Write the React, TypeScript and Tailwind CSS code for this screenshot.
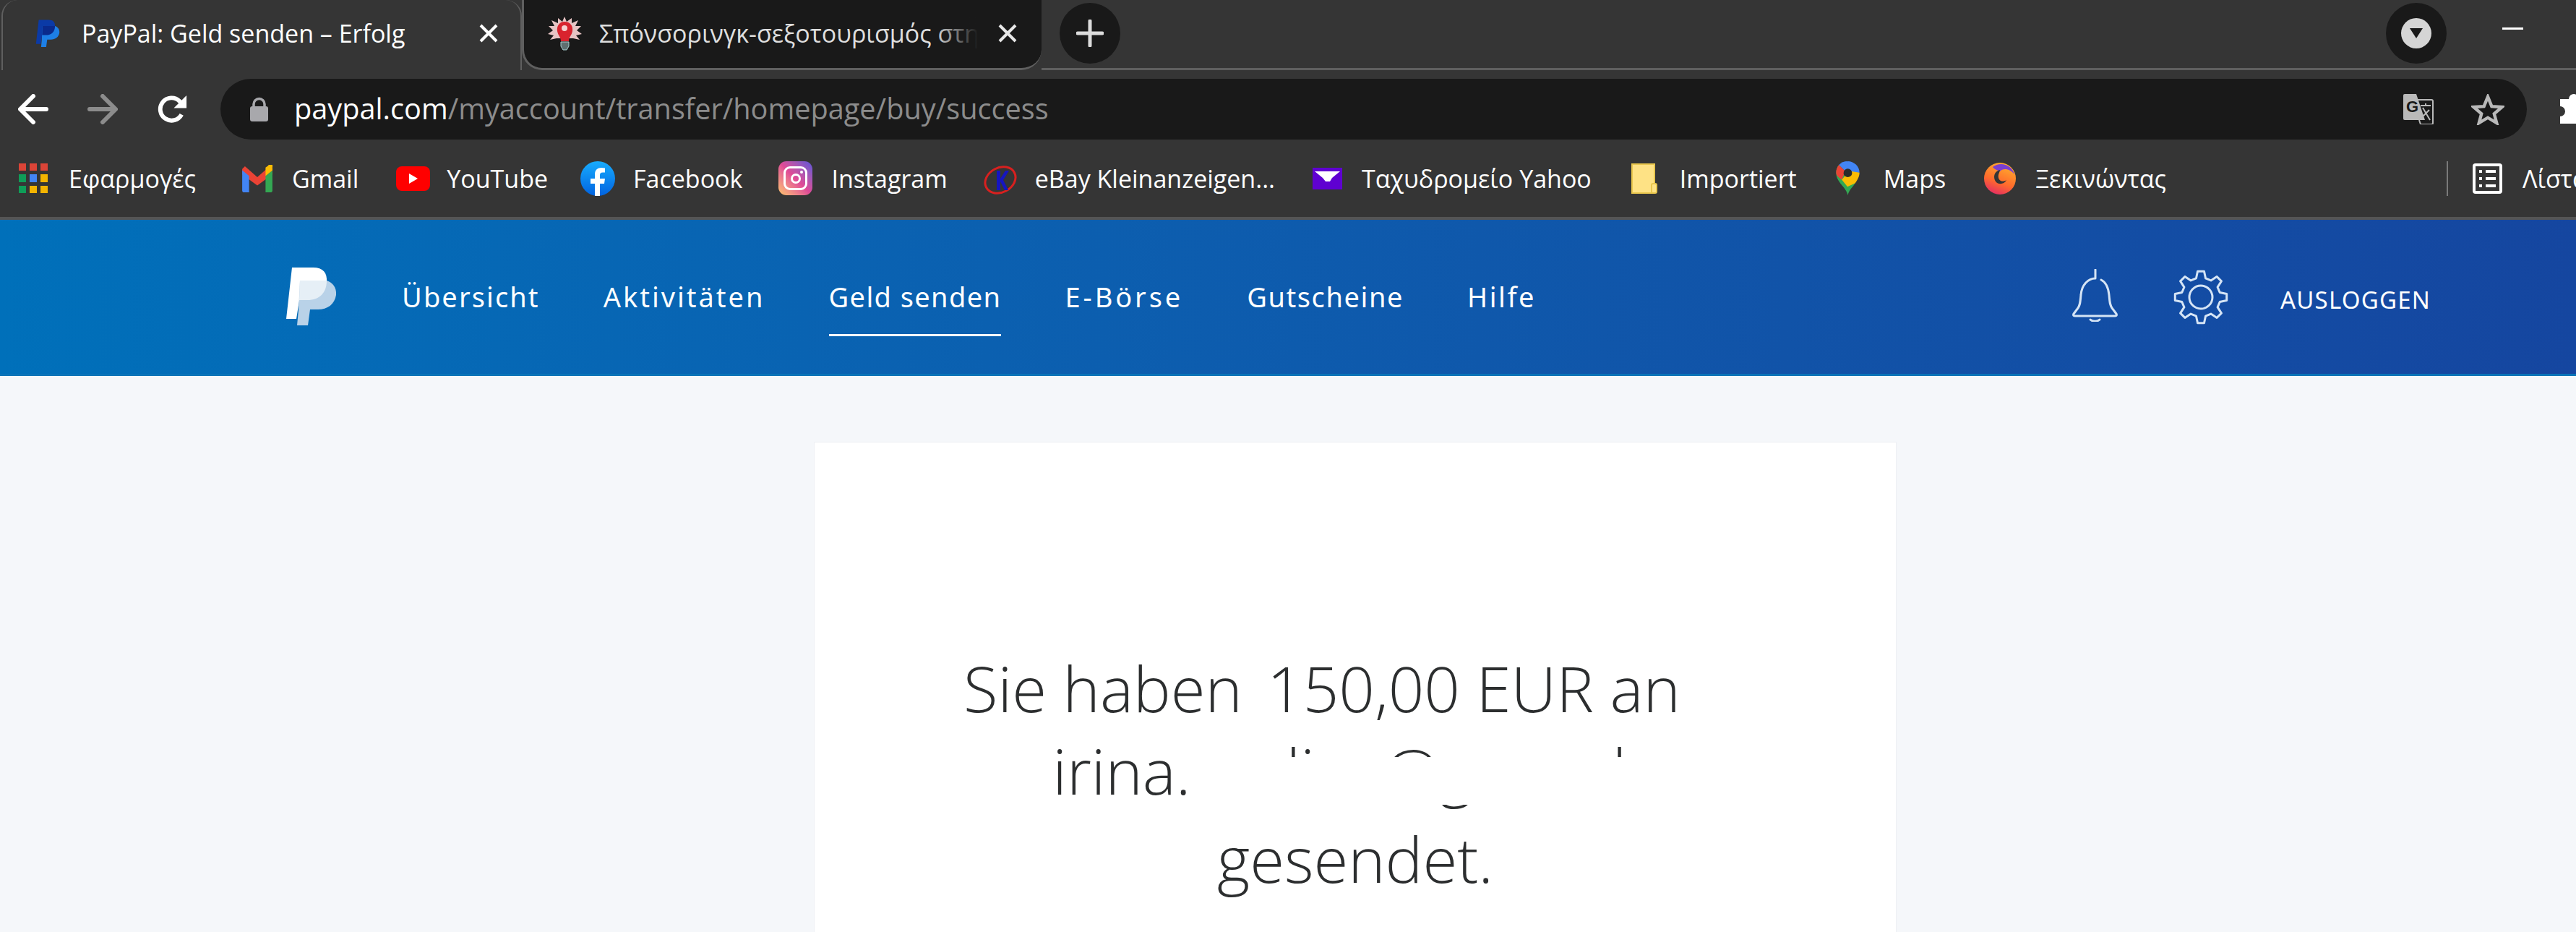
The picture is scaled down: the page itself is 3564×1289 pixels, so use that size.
import React from "react";

const PPLogo = ({ a, b, c, className }: { a: string; b: string; c: string; className: string }) => (
  <svg viewBox="0 0 71 81" className={className}>
    <path fill={a} d="M9 1 H38 C52 1 58 8 57 21 C56 37 46 47 30 47 H19 L15 72 H1 Z" />
    <path fill={b} d="M20 19 H57 C65 22 71 28 70 39 C68 52 58 59 45 59 H34 L31 81 H16 L18 60 Z" />
    <path fill={c} d="M20 19 H57 C57 36 47 46 30 46 H19 Z" />
  </svg>
);

const gearPath = (() => {
  const n = 8;
  const pts: string[] = [];
  for (let i = 0; i < n; i++) {
    const t = (i * 2 * Math.PI) / n - Math.PI / 2;
    const s = Math.PI / n;
    const list: [number, number][] = [
      [27, t - s * 0.62],
      [36, t - s * 0.32],
      [36, t + s * 0.32],
      [27, t + s * 0.62],
    ];
    list.forEach(([r, a]) => pts.push(`${(38 + r * Math.cos(a)).toFixed(1)} ${(38 + r * Math.sin(a)).toFixed(1)}`));
  }
  return "M" + pts.join(" L") + " Z";
})();

const Bookmark = ({ icon, label, className }: { icon: React.ReactNode; label: string; className: string }) => (
  <div className={`flex items-center shrink-0 ${className}`}>
    {icon}
    <span className="text-[34px] leading-none text-white whitespace-nowrap">{label}</span>
  </div>
);

const Apps = () => (
  <div className="grid grid-cols-3 gap-[5px] w-[40px] h-[41px] mr-[29px]">
    {["#db4437", "#db4437", "#db4437", "#0f9d58", "#4285f4", "#f4b400", "#0f9d58", "#f4b400", "#f4b400"].map((c, i) => (
      <div key={i} style={{ backgroundColor: c }} />
    ))}
  </div>
);

export default function App() {
  return (
    <div className="w-[3564px] h-[1289px] overflow-hidden bg-[#f5f7fa] font-['Open_Sans',sans-serif]">
      {/* tab strip */}
      <div className="flex h-[97px] bg-[#353535]">
        <div className="w-[720px] ml-[2px] h-[97px] flex items-center rounded-t-[22px] border-x-[2px] border-[#5f5f5f] pl-[44px] shrink-0 pb-[6px]">
          <PPLogo a="#0b3aa6" b="#1d7fe6" c="#0a2a8c" className="w-[36px] h-[38px] mr-[29px]" />
          <span className="text-[34px] leading-none text-white whitespace-nowrap w-[550px]">PayPal: Geld senden – Erfolg</span>
          <svg viewBox="0 0 26 26" className="w-[26px] h-[26px]">
            <path d="M2 2 L24 24 M24 2 L2 24" stroke="#fff" strokeWidth="4" />
          </svg>
        </div>
        <div className="w-[719px] h-[97px] bg-[#191919] flex items-center rounded-b-[28px] border-l-[3px] border-b-[3px] border-[#5f5f5f] pl-[33px] shrink-0 pb-[2px]">
          <svg viewBox="0 0 47 47" className="w-[47px] h-[47px] mr-[24px] shrink-0">
            <path d="M23 0 L26 7 L33 2 L33 9 L42 5 L38 13 L46 13 L40 19 L47 24 L39 26 L44 32 L35 30 L12 30 L3 32 L8 26 L0 24 L7 19 L1 13 L9 13 L5 5 L14 9 L14 2 L20 7 Z" fill="#e8c4c4" />
            <path d="M23 7 C31 7 35 13 34 20 C33 26 29 28 29 34 H18 C18 28 14 26 13 20 C12 13 16 7 23 7 Z" fill="#d9232e" />
            <circle cx="23" cy="16" r="4" fill="#f6d0d0" />
            <path d="M18 35 H29 V41 L26 46 H21 L18 41 Z" fill="#5f6f70" stroke="#a8d0d0" strokeWidth="1" />
          </svg>
          <div className="relative w-[524px] h-[46px] overflow-hidden mr-[28px]">
            <span className="block w-[600px] text-[34px] leading-[46px] text-[#dedede] whitespace-nowrap">Σπόνσορινγκ-σεξοτουρισμός στη</span>
            <div className="absolute inset-y-0 right-0 w-[60px] bg-gradient-to-r from-transparent to-[#191919]" />
          </div>
          <svg viewBox="0 0 26 26" className="w-[26px] h-[26px] shrink-0">
            <path d="M2 2 L24 24 M24 2 L2 24" stroke="#e8e8e8" strokeWidth="4" />
          </svg>
        </div>
        <div className="flex-1 flex items-start border-b-[3px] border-[#5f5f5f] pt-[3px] pl-[25px] pr-[73px]">
          <div className="w-[84px] h-[84px] rounded-full bg-[#191919] flex items-center justify-center mt-px">
            <svg viewBox="0 0 38 38" className="w-[38px] h-[38px]">
              <path d="M19 2 V36 M2 19 H36" stroke="#dcdcdc" strokeWidth="5" strokeLinecap="round" />
            </svg>
          </div>
          <div className="flex-1" />
          <div className="w-[84px] h-[84px] rounded-full bg-[#191919] flex items-center justify-center mt-px">
            <div className="w-[42px] h-[42px] rounded-full bg-[#d5d5d5] flex items-center justify-center">
              <svg viewBox="0 0 20 16" className="w-[20px] h-[16px]">
                <path d="M1 1 H19 L10 15 Z" fill="#191919" />
              </svg>
            </div>
          </div>
          <div className="w-[29px] h-[3px] bg-white ml-[77px] mt-[35px]" />
        </div>
      </div>

      {/* toolbar */}
      <div className="flex items-center h-[96px] bg-[#353535] pt-[12px] pl-[25px]">
        <svg viewBox="0 0 42 42" className="w-[42px] h-[42px] shrink-0" fill="none" stroke="#fff" strokeWidth="6" strokeLinecap="round" strokeLinejoin="round">
          <path d="M39 21 H4 M21 3 L3 21 L21 39" />
        </svg>
        <svg viewBox="0 0 42 42" className="w-[42px] h-[42px] ml-[54px] shrink-0" fill="none" stroke="#8c8c8c" strokeWidth="6" strokeLinecap="round" strokeLinejoin="round">
          <path d="M3 21 H38 M21 3 L39 21 L21 39" />
        </svg>
        <svg viewBox="0 0 44 44" className="w-[43px] h-[43px] ml-[54px] shrink-0" fill="none">
          <path d="M35 29 A16 16 0 1 1 32 10 L38 16" stroke="#fff" strokeWidth="6" />
          <path d="M42 2 V20 H24 Z" fill="#fff" />
        </svg>
        <div className="ml-[45px] w-[3191px] h-[84px] shrink-0 rounded-[42px] bg-[#191919] flex items-center pl-[41px] pr-[31px]">
          <svg viewBox="0 0 25 34" className="w-[25px] h-[34px] mr-[36px] shrink-0">
            <path d="M5 14 V10 A7.5 7.5 0 0 1 20 10 V14" fill="none" stroke="#a8a8ac" strokeWidth="3.5" />
            <rect x="0" y="13" width="25" height="21" rx="3" fill="#a8a8ac" />
          </svg>
          <span className="text-[39.7px] leading-none text-white whitespace-nowrap">
            paypal.com<span className="text-[#8c8c8c]">/myaccount/transfer/homepage/buy/success</span>
          </span>
          <div className="flex-1" />
          <svg viewBox="0 0 42 42" className="w-[42px] h-[42px]">
            <path d="M16 8 H39 A2 2 0 0 1 41 10 V40 A2 2 0 0 1 39 42 H24 L22 36" fill="none" stroke="#b9b9b9" strokeWidth="2" />
            <path d="M2 0 H18 L30 36 H2 A2 2 0 0 1 0 34 V2 A2 2 0 0 1 2 0 Z" fill="#b9b9b9" />
            <text x="4" y="25" fontSize="22" fontWeight="700" fill="#191919" fontFamily="Liberation Sans, sans-serif">G</text>
            <path d="M24 16 H38 M31 13 V16 M27 31 L36 22 M27 19 L37 36" stroke="#b9b9b9" strokeWidth="2" fill="none" />
          </svg>
          <svg viewBox="0 0 46 44" className="w-[46px] h-[43px] ml-[52px]">
            <path d="M23 4 L28.500 17.500 L43 18.500 L32 28 L35.500 41 L23 33.500 L10.500 41 L14 28 L3 18.500 L17.500 17.500 Z" fill="none" stroke="#b9b9b9" strokeWidth="4.500" />
          </svg>
        </div>
        <svg viewBox="0 0 44 44" className="w-[44px] h-[44px] ml-[46px] shrink-0">
          <path d="M0 8 H12 A7 7 0 0 1 26 8 H38 V18 A7 7 0 0 1 38 32 V42 H0 V32 A7 7 0 0 0 0 18 Z" fill="#fff" />
        </svg>
      </div>

      {/* bookmarks */}
      <div className="flex items-center h-[107px] bg-[#353535] pl-[26px] overflow-hidden">
        <Bookmark className="" icon={<Apps />} label="Εφαρμογές" />
        <Bookmark
          className="ml-[63px]"
          label="Gmail"
          icon={
            <svg viewBox="0 0 44 40" className="w-[44px] h-[38px] mr-[26px]">
              <path d="M0 6 L4 2 L22 18 L40 2 L44 6 V14 L22 30 L0 14 Z" fill="#ea4335" />
              <path d="M0 8 L10 16 V40 H3 A3 3 0 0 1 0 37 Z" fill="#4285f4" />
              <path d="M44 8 L34 16 V40 H41 A3 3 0 0 0 44 37 Z" fill="#34a853" />
              <path d="M34 16 L44 8 V3 A3 3 0 0 0 38 1 L34 4 Z" fill="#fbbc04" />
            </svg>
          }
        />
        <Bookmark
          className="ml-[52px]"
          label="YouTube"
          icon={
            <div className="w-[47px] h-[34px] rounded-[8px] bg-[#f00] flex items-center justify-center mr-[23px]">
              <svg viewBox="0 0 12 14" className="w-[12px] h-[14px]">
                <path d="M0 0 L12 7 L0 14 Z" fill="#fff" />
              </svg>
            </div>
          }
        />
        <Bookmark
          className="ml-[45px]"
          label="Facebook"
          icon={
            <svg viewBox="0 0 48 48" className="w-[48px] h-[48px] mr-[25px]">
              <defs>
                <linearGradient id="fb" x1="0" y1="0" x2="0" y2="1">
                  <stop offset="0" stopColor="#18acfe" />
                  <stop offset="1" stopColor="#0163e0" />
                </linearGradient>
              </defs>
              <circle cx="24" cy="24" r="24" fill="url(#fb)" />
              <path d="M20 48 V31 H14 V24 H20 V18 C20 12 24 9 29 9 L34 9.500 V15.500 H31 C28 15.500 27 17 27 19 V24 H34 L33 31 H27 V48 Z" fill="#fff" />
            </svg>
          }
        />
        <Bookmark
          className="ml-[50px]"
          label="Instagram"
          icon={
            <div className="w-[47px] h-[47px] rounded-[11px] bg-gradient-to-tr from-[#fdc468] via-[#df4996] to-[#5b51d8] flex items-center justify-center mr-[26px]">
              <div className="relative w-[33px] h-[33px] rounded-[9px] border-[3px] border-white flex items-center justify-center">
                <div className="w-[14px] h-[14px] rounded-full border-[3px] border-white" />
                <div className="absolute top-[3px] right-[3px] w-[4px] h-[4px] rounded-full bg-white" />
              </div>
            </div>
          }
        />
        <Bookmark
          className="ml-[49px]"
          label="eBay Kleinanzeigen..."
          icon={
            <svg viewBox="0 0 49 48" className="w-[49px] h-[48px] mr-[23px]">
              <ellipse cx="24" cy="26" rx="22" ry="17" transform="rotate(-28 24 26)" fill="none" stroke="#d8201f" strokeWidth="3" />
              <path d="M19 13 H24 V24 L31 13 H36 L28 26 L35 40 H30 L24 28 V40 H19 Z" fill="#1515c0" />
            </svg>
          }
        />
        <Bookmark
          className="ml-[52px]"
          label="Ταχυδρομείο Yahoo"
          icon={
            <svg viewBox="0 0 41 30" className="w-[41px] h-[30px] mr-[27px]">
              <rect width="41" height="30" fill="#5f01d1" />
              <path d="M3 5 H38 L27 14 L24 19 H18 L14 14 Z" fill="#fff" />
            </svg>
          }
        />
        <Bookmark
          className="ml-[55px]"
          label="Importiert"
          icon={
            <svg viewBox="0 0 36 42" className="w-[36px] h-[42px] mr-[31px]">
              <rect x="1" y="1" width="31" height="40" fill="#fee285" stroke="#e9c74e" strokeWidth="2" />
              <rect x="28" y="28" width="7" height="13" rx="2" fill="#fee285" stroke="#e9c74e" strokeWidth="2" />
            </svg>
          }
        />
        <Bookmark
          className="ml-[54px]"
          label="Maps"
          icon={
            <svg viewBox="0 0 33 48" className="w-[33px] h-[47px] mr-[33px]">
              <path d="M16.500 48 C14 36 0 30 0 16 C0 12 1.500 8 4 5 L27 31 C23 37 18 41 16.500 48 Z" fill="#34a853" />
              <path d="M4 5 L13 14 L8 26 C3 22 0 20 0 16 C0 12 1.500 8 4 5 Z" fill="#ea4335" />
              <path d="M8 26 L22 10 L33 16 C33 22 30 26 27 31 L16 36 Z" fill="#fbbc04" />
              <path d="M4 5 C7 2 11 0 16.500 0 L20 10 L13 14 Z" fill="#4285f4" />
              <path d="M16.500 0 C25 0 33 7 33 16 L20 14 L16.500 10 Z" fill="#4285f4" />
              <circle cx="16.500" cy="16.500" r="6" fill="#2b2b2b" />
            </svg>
          }
        />
        <Bookmark
          className="ml-[53px]"
          label="Ξεκινώντας"
          icon={
            <svg viewBox="0 0 44 44" className="w-[44px] h-[44px] mr-[27px]">
              <defs>
                <linearGradient id="ff" x1="0.7" y1="0" x2="0.3" y2="1">
                  <stop offset="0" stopColor="#ffb02e" />
                  <stop offset="0.6" stopColor="#ff6b2c" />
                  <stop offset="1" stopColor="#e42c64" />
                </linearGradient>
              </defs>
              <circle cx="22" cy="22" r="22" fill="url(#ff)" />
              <path d="M12 6 C22 -2 38 2 42 16 C36 8 26 7 22 12 C18 10 14 9 12 6 Z" fill="#7a3fd0" />
              <path d="M22 10 C14 12 12 20 16 26 C20 31 28 30 31 24 C27 27 21 26 20 21 C19 16 22 13 22 10 Z" fill="#353535" />
            </svg>
          }
        />
        <div className="w-[2px] h-[48px] bg-[#7a7a7a] ml-[388px] shrink-0" />
        <Bookmark
          className="ml-[34px]"
          label="Λίστα ανάγνωσης"
          icon={
            <svg viewBox="0 0 41 42" className="w-[41px] h-[42px] mr-[28px]">
              <rect x="2" y="2" width="37" height="38" rx="2" fill="#353535" stroke="#fff" strokeWidth="4" />
              <path d="M9 11 H13 M18 11 H32 M9 21 H13 M18 21 H32 M9 31 H13 M18 31 H32" stroke="#fff" strokeWidth="4" />
            </svg>
          }
        />
      </div>
      <div className="h-[4px] bg-[#555555]" />

      {/* PayPal header */}
      <div className="h-[216px] border-b-[3px] border-[#0a74b8] bg-gradient-to-r from-[#0070ba] to-[#1546a0] flex items-center pl-[395px] pr-[201px]">
        <PPLogo a="#ffffff" b="#b9d2e8" c="#e6eff6" className="w-[71px] h-[81px] mr-[90px] -mt-[2px]" />
        <nav className="flex items-start gap-[88px] text-[38px] leading-[52px] text-white font-['Noto_Sans',sans-serif] h-[81px] mt-[28px]">
          <span className="tracking-[2.1px]">Übersicht</span>
          <span className="tracking-[3px]">Aktivitäten</span>
          <span className="tracking-[1.4px] h-[81px] border-b-[3px] border-white">Geld senden</span>
          <span className="tracking-[3.9px]">E-Börse</span>
          <span className="tracking-[1.6px]">Gutscheine</span>
          <span className="tracking-[2.5px]">Hilfe</span>
        </nav>
        <div className="flex-1" />
        <svg viewBox="0 0 63 73" className="w-[63px] h-[73px] -mt-[4px]" fill="none" stroke="#d5e4f5" strokeWidth="3" strokeLinecap="round" strokeLinejoin="round">
          <path d="M32 1 V13 C22 13 13 22 12 36 C11 46 11 50 8 54 L2 62 C1 64 2 65 4 65 H59 C61 65 62 64 61 62 L55 54 C52 50 52 46 51 36 C50 26 46 18 40 15" />
          <path d="M25 70 C28 73 35 73 38 70" />
        </svg>
        <svg viewBox="0 0 76 76" className="w-[76px] h-[76px] ml-[77px]" fill="none" stroke="#d5e4f5" strokeWidth="3" strokeLinejoin="round">
          <path d={gearPath} />
          <circle cx="38" cy="38" r="16" />
        </svg>
        <span className="ml-[72px] text-[33px] leading-none tracking-[1.2px] text-white font-['Noto_Sans',sans-serif] mt-[8px]">AUSLOGGEN</span>
      </div>

      {/* card */}
      <div className="w-[1498px] h-[800px] ml-[1126px] mt-[91px] bg-white border border-[#eef0f4] pt-[280px]">
        <h1 className="text-[87px] leading-[118px] font-light text-[#2c2e2f] text-center font-['Open_Sans',sans-serif]">
          <div className="whitespace-nowrap pr-[92px]">Sie haben<span className="ml-[34px]">150,00 EUR an</span></div>
          <div className="relative -top-[4px] whitespace-nowrap">
            irina.<span className="ml-[2px]">xxx</span>li<span className="ml-[9px]">xx</span>@g<span className="mr-[21px]">xxxx</span>lx
            <div className="absolute left-[521px] top-[41px] w-[700px] h-[66px] bg-white" />
          </div>
          <div>gesendet.</div>
        </h1>
      </div>
    </div>
  );
}
